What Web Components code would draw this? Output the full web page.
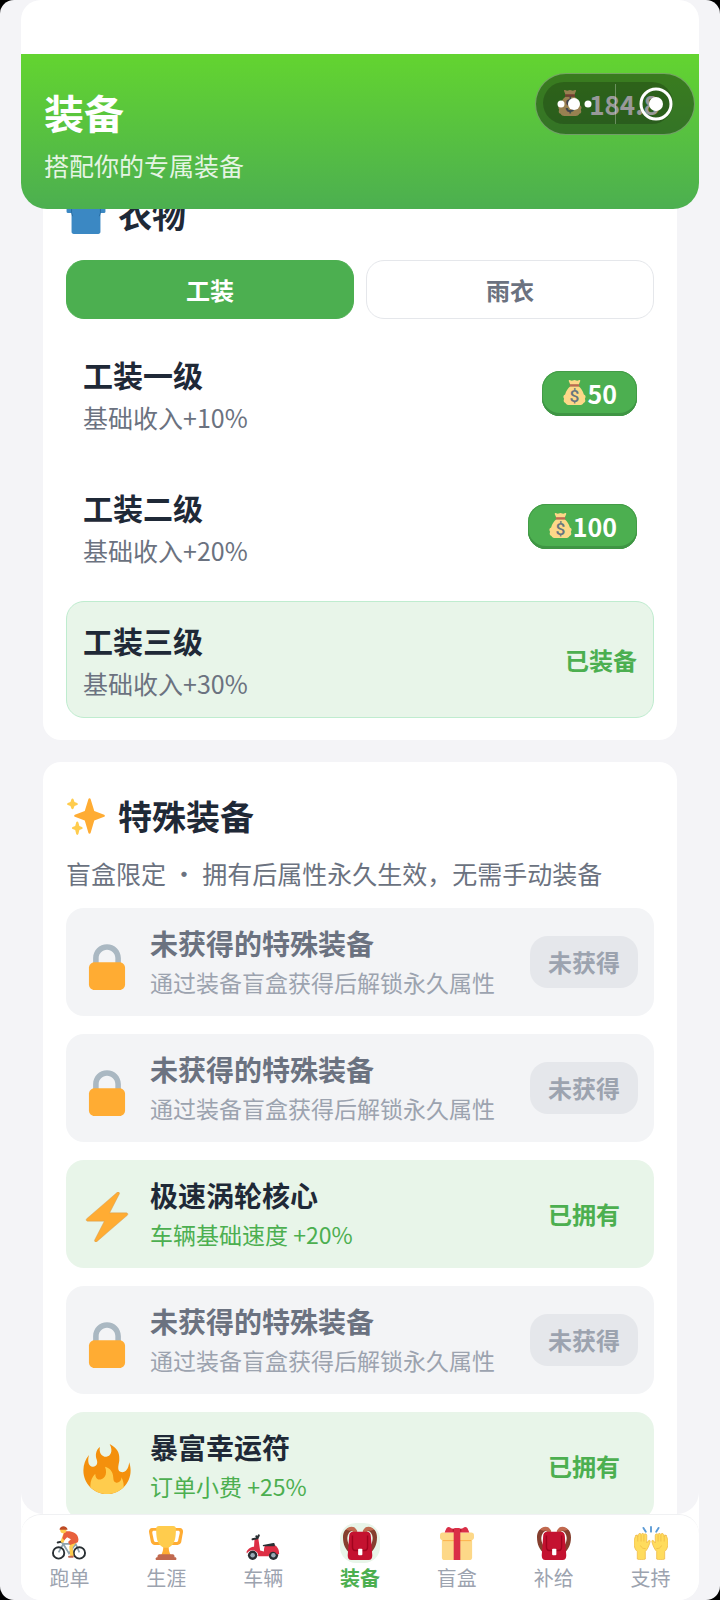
<!DOCTYPE html>
<html lang="zh-CN">
<head>
<meta charset="utf-8">
<meta name="viewport" content="width=device-width, initial-scale=1">
<title>装备</title>
<style>
  html {
    background: #000;
  }

  body {
    margin: 0;
    background: #f4f4f7;
    border-radius: 14px;
    overflow: hidden;
    font-family: "Noto Sans CJK SC", sans-serif;
    color: #1f2937;
  }
</style>
</head>
<body>
<game-app>
  <page-header slot="header" heading="装备" sub="搭配你的专属装备" coins="184.8"></page-header>

  <gear-card icon="shirt" heading="衣物">
    <gear-tabs>
      <button aria-pressed="true">工装</button>
      <button aria-pressed="false">雨衣</button>
    </gear-tabs>
    <level-row heading="工装一级" sub="基础收入+10%" price="50"></level-row>
    <level-row heading="工装二级" sub="基础收入+20%" price="100"></level-row>
    <level-row heading="工装三级" sub="基础收入+30%" equipped></level-row>
  </gear-card>

  <gear-card icon="sparkles" heading="特殊装备" note="盲盒限定 • 拥有后属性永久生效，无需手动装备">
    <special-row></special-row>
    <special-row></special-row>
    <special-row owned icon="bolt" heading="极速涡轮核心" sub="车辆基础速度 +20%"></special-row>
    <special-row></special-row>
    <special-row owned icon="fire" heading="暴富幸运符" sub="订单小费 +25%"></special-row>
  </gear-card>

  <nav-bar slot="nav">
    <nav-item icon="cyclist">跑单</nav-item>
    <nav-item icon="trophy">生涯</nav-item>
    <nav-item icon="scooter">车辆</nav-item>
    <nav-item icon="backpack" active>装备</nav-item>
    <nav-item icon="gift">盲盒</nav-item>
    <nav-item icon="backpack">补给</nav-item>
    <nav-item icon="hands">支持</nav-item>
  </nav-bar>
</game-app>

<script>
const icons = {
  shirt: `
    <path fill="#3B88C3" d="M12 3C6 4 2 7 .5 12v4c0 .7.400 1 1 1H5v17c0 1.200.800 2 2 2h22c1.200 0 2-.8 2-2V17h3.500c.6 0 1-.3 1-1v-4C34 7 30 4 24 3c-3 4-9 4-12 0z"/>
    <path fill="none" stroke="#226699" stroke-width=".7" d="M5 12v5l1 3M31 12v5l-1 3"/>`,
  sparkles: `
    <path fill="#FFAC33" d="M34.347 16.893l-8.899-3.294-3.323-10.891c-.128-.42-.517-.708-.956-.708-.439 0-.828.288-.956.708l-3.322 10.891-8.900 3.294c-.393.146-.653.519-.653.938 0 .418.260.793.653.938l8.895 3.293 3.324 11.223c.126.424.516.715.959.715.442 0 .833-.291.959-.716l3.324-11.223 8.896-3.293c.391-.144.652-.518.652-.937 0-.418-.261-.792-.653-.938z"/>
    <path fill="#FFCC4D" d="M14.347 27.894l-2.314-.856-.9-3.300c-.118-.436-.513-.738-.964-.738-.451 0-.846.302-.965.737l-.9 3.300-2.313.856c-.393.145-.653.520-.653.938 0 .418.260.793.653.938l2.301.853.907 3.622c.112.444.511.756.970.756.459 0 .858-.312.970-.757l.907-3.622 2.301-.853c.393-.144.653-.519.653-.937 0-.418-.26-.793-.653-.937zM10.009 6.231l-2.364-.875-.876-2.365c-.145-.393-.519-.653-.938-.653-.418 0-.792.260-.938.653l-.875 2.365-2.365.875c-.393.146-.653.520-.653.938 0 .418.260.793.653.938l2.365.875.875 2.365c.146.393.520.653.938.653.418 0 .792-.26.938-.653l.875-2.365 2.365-.875c.393-.146.653-.52.653-.938 0-.418-.26-.792-.653-.938z"/>`,
  lock: `
    <path fill="#AAB8C2" d="M18 3C12.477 3 8 7.477 8 13v10h4V13c0-3.313 2.686-6 6-6s6 2.687 6 6v10h4V13c0-5.523-4.477-10-10-10z"/>
    <path fill="#FFAC33" d="M31 32c0 2.209-1.791 4-4 4H9c-2.209 0-4-1.791-4-4V20c0-2.209 1.791-4 4-4h18c2.209 0 4 1.791 4 4v12z"/>`,
  bolt: `
    <path fill="#FFAC33" stroke="#c99a5a" stroke-width=".3" d="M32.938 15.651C32.792 15.260 32.418 15 32 15H19.925L26.890 1.458c.219-.426.106-.947-.271-1.243C26.437.071 26.218 0 26 0c-.233 0-.466.082-.653.243L18 6.588 3.347 19.243c-.316.273-.43.714-.284 1.105S3.582 21 4 21h12.075L9.110 34.542c-.219.426-.106.947.271 1.243.182.144.401.215.619.215.233 0 .466-.082.653-.243L18 29.412l14.653-12.655c.317-.273.430-.714.285-1.106z"/>`,
  fire: `
    <path fill="#F4900C" d="M35 19c0-2.062-.367-4.039-1.040-5.868-.46 5.389-3.333 8.157-6.335 6.868-2.812-1.208-.917-5.917-.777-8.164.236-3.809-.012-8.169-6.931-11.794 2.875 5.500.333 8.917-2.333 9.125-2.958.231-5.667-2.542-4.667-7.042-3.238 2.386-3.332 6.402-2.333 9 1.042 2.708-.042 4.958-2.583 5.208-2.840.280-4.418-3.041-2.963-8.333C2.520 10.965 1 14.805 1 19c0 9.389 7.611 17 17 17s17-7.611 17-17z"/>
    <path fill="#FFCC4D" d="M28.394 23.999c.148 3.084-2.561 4.293-4.019 3.709-2.106-.843-1.541-2.291-2.083-5.291s-2.625-5.083-5.708-6c2.250 6.333-1.247 8.667-3.080 9.084-1.872.426-3.753-.001-3.968-4.007C7.352 23.668 6 26.676 6 30c0 .368.023.730.055 1.090C9.125 34.124 13.342 36 18 36s8.875-1.876 11.945-4.910c.032-.36.055-.722.055-1.090 0-2.187-.584-4.236-1.606-6.001z"/>`,
  coins: `
    <path fill="#FDD888" d="M11 0l3 1 4-1 4 1 3-1c1.500 0 1.500 1 1 2l-2 5H12l-2-5c-.5-1-.5-2 1-2zM12 9h12c4 3 6 7 7.500 12 3 1 3 4 1.500 6 1 3 1 5-2 6-1 2-3 3-5 3H10c-2 0-4-1-5-3-3-1-3-3-2-6-1.500-2-1.500-5 1.500-6C6 16 8 12 12 9z"/>
    <rect fill="#BF6952" x="11" y="6" width="14" height="3.500" rx="1.700"/>
    <text x="18" y="31" text-anchor="middle" font-family="Roboto, sans-serif" font-size="25" font-weight="500" fill="#67757F">$</text>`,
  cyclist: `
    <path fill="none" stroke="#8fa3ae" stroke-width="1.800" d="M7 28l5-9h13l4 9M12 19l6 10 7-10M9 17l4 2M18 29l-7-11"/>
    <circle fill="none" stroke="#292f33" stroke-width="2" cx="7" cy="28.500" r="6"/>
    <circle fill="none" stroke="#292f33" stroke-width="2" cx="29" cy="28.500" r="6"/>
    <path fill="none" stroke="#292f33" stroke-width="2" stroke-linecap="round" d="M6 17.500l4-1"/>
    <path fill="none" stroke="#FFCC4D" stroke-width="3.500" stroke-linecap="round" stroke-linejoin="round" d="M14 8l-3 8M24 17l-4 5 1 9"/>
    <path fill="none" stroke="#C1694F" stroke-width="2" stroke-linecap="round" d="M18 32.500h4"/>
    <path fill="#E8603C" d="M13 6c6-1 14 0 15 8 0 3-1 4-3 4l-6 2-2-3 3-3-4-2-3 3-2-2z"/>
    <circle fill="#FFCC4D" cx="12" cy="4.500" r="3.200"/>
    <path fill="#BE4B25" d="M8 4c0-5 8-5 8.500 0z"/>`,
  trophy: `
    <path fill="#FFAC33" d="M5.123 5h6C12.227 5 13 4.896 13 6V4c0-1.104-.773-2-1.877-2h-8c-2 0-3.583 2.125-3 5 0 0 1.791 9.375 1.917 9.958C2.373 18.500 4.164 20 6.081 20h6.958c1.105 0-.039-1.896-.039-3v-2c0 1.104-.773 2-1.877 2h-4c-1.104 0-1.833-1.042-2-2S3.539 7.667 3.539 7.667C3.206 5.750 4.018 5 5.123 5zm25.812 0h-6C23.831 5 22 4.896 22 6V4c0-1.104 1.831-2 2.935-2h8c2 0 3.584 2.125 3 5 0 0-1.633 9.419-1.771 10-.354 1.500-2.042 3-4 3h-7.146C21.914 20 22 18.104 22 17v-2c0 1.104 1.831 2 2.935 2h4c1.104 0 1.834-1.042 2-2s1.584-7.333 1.584-7.333C32.851 5.750 32.040 5 30.935 5zM20.832 22c0-6.958-2.709 0-2.709 0s-3-6.958-3 0-3.291 10-3.291 10h12.292c-.001 0-3.292-3.042-3.292-10z"/>
    <path fill="#FFCC4D" d="M28.500 3c0 9-1 14-4 17-2 2-4 3-6.400 3s-4.500-1-6.500-3c-3-3-4-8-4-17 0-2 1-3 3-3h15c2 0 2.900 1 2.900 3z"/>
    <path fill="#C1694F" d="M11.200 30h13.900c1 0 1.900.900 1.900 2v1h.7c.8 0 1.300.600 1.300 1.400v.2c0 .8 0 1.400-1.300 1.400H8.500C7.200 36 7 35.400 7 34.600v-.2C7 33.600 7.700 33 9 33v-1c0-1.100 1.200-2 2.200-2z"/>`,
  scooter: `
    <circle fill="#292f33" cx="7" cy="31" r="5"/>
    <circle fill="#292f33" cx="29" cy="31" r="5"/>
    <circle fill="#99AAB5" cx="7" cy="31" r="2.400"/>
    <circle fill="#99AAB5" cx="29" cy="31" r="2.400"/>
    <path fill="#DD2E44" d="M9 14l4-1 2 13 4 1c0-5 1-7 3-7h8c3 1 5.500 5 5 10h-2.500c-1-4-8-4-8.500 2H13c0-5-4-7-8-6-2 .5-3 2-4 3l-.5-1.500C2 24 6 22 8.500 22z"/>
    <path fill="#292f33" d="M18 20l11-2c1 0 1.500.500 1.500 2v1.500H19c-1 0-1.500-1-1-1.500z"/>
    <path fill="none" stroke="#292f33" stroke-width="2.200" stroke-linecap="round" d="M7 14l5-1 1.500-3M12 13l-1-2"/>`,
  backpack: `
    <path fill="#853f2e" d="M13 2C5 0 0 4 0 12c0 8 3 13 7 17l2-5C5 19 3 13 6 8c2-3 4-3 5-2zM23 2c8-2 13 2 13 10 0 8-3 13-7 17l-2-5c4-5 6-11 3-16-2-3-4-3-5-2z"/>
    <path fill="#C1694F" d="M3 4c3-4 9-5 12 1v4h-4c0-3-1-5-4-4zM33 4c-3-4-9-5-12 1v4h4c0-3 1-5 4-4z"/>
    <path fill="#C41230" d="M11 6h14c3 0 4.500 2 4.500 5l1.500 20c0 3-1 5-4 5H9c-3 0-4-2-4-5l1.500-20c0-3 1.500-5 4.500-5z"/>
    <path fill="none" stroke="#A0041E" stroke-width="1.500" d="M10 10v12c0 2 1 4 3 4h10c2 0 3-2 3-4V10"/>
    <rect fill="#fff" x="16" y="24" width="4.500" height="7" rx="1"/>`,
  gift: `
    <path fill="#FDD888" d="M2 14h32v19c0 2-1 3-3 3H5c-2 0-3-1-3-3z"/>
    <rect fill="#FCAB40" x="3" y="14" width="30" height="2"/>
    <rect fill="#FDD888" x="0" y="7" width="36" height="8" rx="3"/>
    <rect fill="#DA2F47" x="14.500" y="5" width="7" height="31"/>
    <path fill="#DA2F47" d="M5 7c1-3 2-6 4-6 2 0 3 2 5 2 1-1 2-1 4-1s3 0 4 1c2 0 3-2 5-2s3 3 4 6z"/>
    <path fill="none" stroke="#A0041E" stroke-width=".8" d="M14 3v3M22 3v3"/>`,
  hands: `
    <path fill="none" stroke="#5C9BD6" stroke-width="2" stroke-linecap="round" d="M10 2l2.500 4M18 1v5M26 2l-2.500 4"/>
    <g stroke-linecap="round">
      <path fill="#FFDC5D" stroke="#EFB846" stroke-width=".8" d="M2 10c1-1 2 0 2 1l.5-2c1-2 3-1 3 0 1-2 3-1 3 0 1-1 3-1 3 1v8l1.500-2c1-1.500 2.500-1 2 1-1 4-3 8-5 10v8c-2 1-6 1-8.500 0v-8C1 25 0 22 0 17c0-3 1-5 2-7z"/>
      <path fill="none" stroke="#EFB846" stroke-width=".8" d="M4 11v5M7.500 10v6M10.500 10v6M12 24c-3 0-4-1-5-3"/>
    </g>
    <g stroke-linecap="round" transform="translate(36 0) scale(-1 1)">
      <path fill="#FFDC5D" stroke="#EFB846" stroke-width=".8" d="M2 10c1-1 2 0 2 1l.5-2c1-2 3-1 3 0 1-2 3-1 3 0 1-1 3-1 3 1v8l1.500-2c1-1.500 2.500-1 2 1-1 4-3 8-5 10v8c-2 1-6 1-8.500 0v-8C1 25 0 22 0 17c0-3 1-5 2-7z"/>
      <path fill="none" stroke="#EFB846" stroke-width=".8" d="M4 11v5M7.500 10v6M10.500 10v6M12 24c-3 0-4-1-5-3"/>
    </g>`,
};

const svg = (name) => `<svg class="icon" viewBox="0 0 36 36" aria-hidden="true">${icons[name]}</svg>`;

class BaseElement extends HTMLElement {
  constructor() {
    super();
    this.attachShadow({ mode: "open" });
  }

  connectedCallback() {
    this.shadowRoot.innerHTML = this.render();
  }

  attr(name, fallback = "") {
    return this.getAttribute(name) || fallback;
  }
}

class GameApp extends BaseElement {
  render() {
    return `
      <style>
        :host {
          display: block;
          padding: 0 21px;
        }

        .frame {
          display: flex;
          flex-direction: column;
          height: 100vh;
          background: #fff;
          border-radius: 20px;
          overflow: hidden;
        }

        .status {
          flex: none;
          height: 54px;
        }

        ::slotted([slot="header"]) {
          position: relative;
          z-index: 1;
        }

        /* the list is scrolled under the header */
        main {
          flex: 1;
          min-height: 0;
          margin-top: -49px;
          padding: 0 22px;
          display: flex;
          flex-direction: column;
          gap: 22px;
          background: #f4f4f7;
          border-radius: 0 0 22px 22px;
          overflow-y: auto;
          scrollbar-width: none;
        }

        .capsule {
          position: absolute;
          z-index: 2;
          top: 73px;
          right: 25px;
          box-sizing: border-box;
          width: 160px;
          height: 62px;
          display: grid;
          grid-template-columns: 1fr 1px 1fr;
          align-items: center;
          border: 1px solid rgba(255, 255, 255, 0.3);
          border-radius: 31px;
          background: rgba(0, 0, 0, 0.4);
        }

        .capsule i {
          height: 40px;
          background: rgba(255, 255, 255, 0.3);
        }

        .capsule button {
          display: grid;
          place-items: center;
          height: 60px;
          padding: 0;
          border: 0;
          background: none;
        }
      </style>
      <div class="frame">
        <div class="status"></div>
        <slot name="header"></slot>
        <main><slot></slot></main>
        <slot name="nav"></slot>
      </div>
      <div class="capsule">
        <button aria-label="更多">
          <svg width="36" height="36" viewBox="0 0 36 36" fill="#fff">
            <circle cx="4" cy="18" r="3.500"/><circle cx="17" cy="18" r="6"/><circle cx="31" cy="18" r="3.500"/>
          </svg>
        </button>
        <i></i>
        <button aria-label="关闭">
          <svg width="36" height="36" viewBox="0 0 36 36" fill="#fff">
            <circle cx="19" cy="18" r="15" fill="none" stroke="#fff" stroke-width="3"/><circle cx="19" cy="18" r="7"/>
          </svg>
        </button>
      </div>`;
  }
}

class PageHeader extends BaseElement {
  render() {
    return `
      <style>
        :host {
          flex: none;
          display: flex;
          justify-content: space-between;
          align-items: flex-start;
          padding: 28px 26px 26px 23px;
          background: linear-gradient(#63d430, #4caf50);
          border-radius: 0 0 26px 26px;
          color: #fff;
        }

        h1 {
          margin: 2px 0 7px;
          font-size: 40px;
          line-height: 56px;
        }

        p {
          margin: 0;
          font-size: 25px;
          line-height: 36px;
          opacity: 0.85;
        }

        .coins {
          display: flex;
          align-items: center;
          gap: 6px;
          padding: 0 14px;
          height: 42px;
          border-radius: 21px;
          background: rgba(0, 0, 0, 0.2);
          font-size: 26px;
          font-weight: 700;
        }

        .icon {
          width: 26px;
          height: 26px;
        }
      </style>
      <div>
        <h1>${this.attr("heading")}</h1>
        <p>${this.attr("sub")}</p>
      </div>
      <div class="coins">${svg("coins")}<span>${this.attr("coins")}</span></div>`;
  }
}

class GearCard extends BaseElement {
  render() {
    const note = this.attr("note");
    return `
      <style>
        :host {
          flex: none;
          display: block;
          padding: 23px 23px 22px;
          background: #fff;
          border-radius: 18px;
        }

        h2 {
          display: flex;
          align-items: center;
          gap: 12px;
          height: 62px;
          margin: 0;
          font-size: 34px;
          line-height: 48px;
        }

        .icon {
          width: 40px;
          height: 40px;
        }

        p {
          margin: 8px 0 0;
          font-size: 25px;
          line-height: 36px;
          color: #6b7280;
        }

        .list {
          display: flex;
          flex-direction: column;
          gap: 16px;
          margin-top: 15px;
        }

        p + .list {
          gap: 18px;
          margin-top: 17px;
        }
      </style>
      <h2>${svg(this.attr("icon"))}${this.attr("heading")}</h2>
      ${note ? `<p>${note}</p>` : ""}
      <div class="list"><slot></slot></div>`;
  }
}

class GearTabs extends BaseElement {
  render() {
    return `
      <style>
        :host {
          display: grid;
          grid-template-columns: 1fr 1fr;
          gap: 12px;
        }

        ::slotted(button) {
          height: 59px;
          padding: 0;
          border: 1px solid #e5e7eb;
          border-radius: 18px;
          background: #fff;
          color: #6b7280;
          font-family: inherit;
          font-size: 24px;
          font-weight: 700;
        }

        ::slotted(button[aria-pressed="true"]) {
          border-color: #4caf50;
          background: #4caf50;
          color: #fff;
        }
      </style>
      <slot></slot>`;
  }
}

class LevelRow extends BaseElement {
  render() {
    const action = this.hasAttribute("equipped")
      ? `<strong>已装备</strong>`
      : `<button>${svg("coins")}${this.attr("price")}</button>`;
    return `
      <style>
        :host {
          box-sizing: border-box;
          display: flex;
          justify-content: space-between;
          align-items: center;
          min-height: 117px;
          padding: 0 16px;
          border: 1px solid transparent;
          border-radius: 18px;
        }

        :host([equipped]) {
          border-color: #bfeccf;
          background: #e8f5e9;
        }

        h3 {
          margin: 0 0 2px;
          font-size: 30px;
          line-height: 44px;
        }

        p {
          margin: 0;
          font-size: 25px;
          line-height: 38px;
          color: #6b7280;
        }

        button {
          display: flex;
          align-items: center;
          height: 45px;
          padding: 0 20px 2px;
          border: 0;
          border-radius: 18px;
          background: #4caf50;
          box-shadow: inset 0 -3px #3f9544, inset 0 0 0 1px #439c47;
          color: #fff;
          font-family: inherit;
          font-size: 25px;
          font-weight: 700;
        }

        .icon {
          width: 25px;
          height: 25px;
        }

        strong {
          font-size: 24px;
          color: #4caf50;
        }
      </style>
      <div>
        <h3>${this.attr("heading")}</h3>
        <p>${this.attr("sub")}</p>
      </div>
      ${action}`;
  }
}

class SpecialRow extends BaseElement {
  render() {
    const owned = this.hasAttribute("owned");
    return `
      <style>
        :host {
          box-sizing: border-box;
          display: flex;
          align-items: center;
          gap: 18px;
          min-height: 108px;
          padding: 0 16px;
          border-radius: 18px;
          background: #f3f4f6;
          color: #6b7280;
        }

        :host([owned]) {
          background: #e8f5e9;
          color: #1f2937;
        }

        .icon {
          flex: none;
          width: 50px;
          height: 50px;
          margin-top: 6px;
        }

        .text {
          flex: 1;
        }

        h3 {
          margin: 0;
          font-size: 28px;
          line-height: 40px;
        }

        p {
          margin: 0;
          font-size: 23px;
          line-height: 38px;
          color: #9ca3af;
        }

        .badge {
          padding: 0 18px;
          border-radius: 18px;
          background: #e5e7eb;
          font-size: 24px;
          font-weight: 700;
          line-height: 52px;
          color: #9ca3af;
        }

        :host([owned]) p {
          color: #4caf50;
        }

        :host([owned]) .badge {
          background: none;
          color: #4caf50;
        }
      </style>
      ${svg(this.attr("icon", "lock"))}
      <div class="text">
        <h3>${this.attr("heading", "未获得的特殊装备")}</h3>
        <p>${this.attr("sub", "通过装备盲盒获得后解锁永久属性")}</p>
      </div>
      <span class="badge">${owned ? "已拥有" : "未获得"}</span>`;
  }
}

class NavBar extends BaseElement {
  render() {
    return `
      <style>
        :host {
          flex: none;
          display: block;
        }

        nav {
          display: flex;
          height: 85px;
          border-top: 1px solid #f0f1f3;
          border-radius: 20px;
          background: #fff;
        }
      </style>
      <nav><slot></slot></nav>`;
  }
}

class NavItem extends BaseElement {
  render() {
    return `
      <style>
        :host {
          flex: 1;
        }

        a {
          display: flex;
          flex-direction: column;
          align-items: center;
          padding-top: 8px;
          color: #9ca3af;
          font-size: 20px;
          line-height: 30px;
          text-decoration: none;
        }

        span {
          display: grid;
          place-items: center;
          width: 40px;
          height: 40px;
          border-radius: 16px;
        }

        .icon {
          width: 34px;
          height: 34px;
        }

        :host([active]) a {
          color: #4caf50;
          font-weight: 700;
        }

        :host([active]) span {
          background: #e8f5e9;
        }
      </style>
      <a href="#"><span>${svg(this.attr("icon"))}</span><slot></slot></a>`;
  }
}

customElements.define("game-app", GameApp);
customElements.define("page-header", PageHeader);
customElements.define("gear-card", GearCard);
customElements.define("gear-tabs", GearTabs);
customElements.define("level-row", LevelRow);
customElements.define("special-row", SpecialRow);
customElements.define("nav-bar", NavBar);
customElements.define("nav-item", NavItem);
</script>
</body>
</html>
